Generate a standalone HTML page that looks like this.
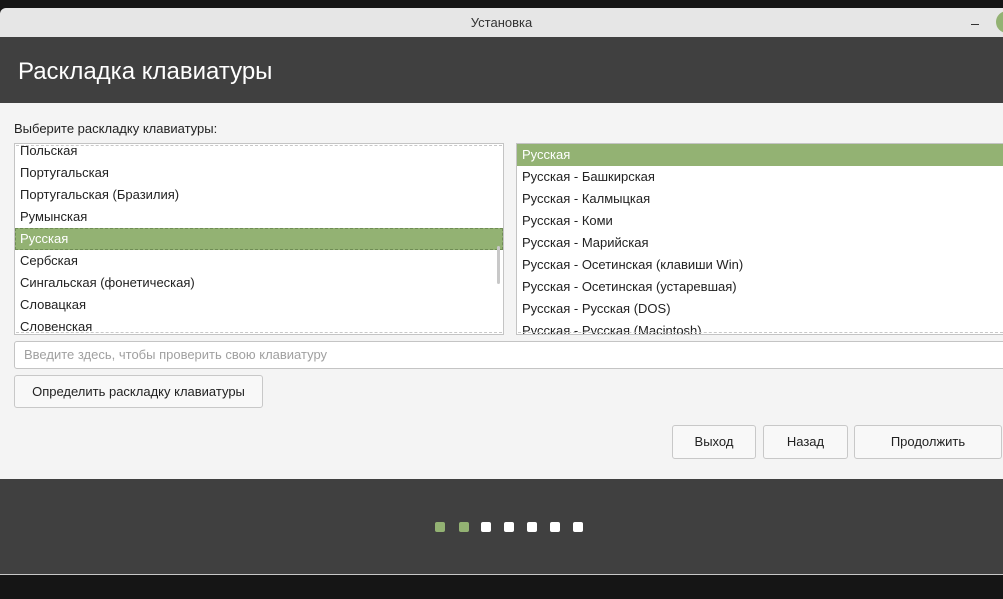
<!DOCTYPE html>
<html><head><meta charset="utf-8"><style>
*{margin:0;padding:0;box-sizing:border-box}
body{width:1003px;height:599px;overflow:hidden;background:#151515;font-family:"Liberation Sans","DejaVu Sans",sans-serif;font-size:13px;color:#222;position:relative}
.abs{position:absolute}
#title{left:0;top:8px;width:1003px;height:29px;background:#e6e6e6;border-radius:6px 0 0 0;text-align:center;line-height:29px;font-size:13px;color:#333}
#hdr{left:0;top:37px;width:1003px;height:66px;background:#404040;color:#fff;font-size:24px;padding-left:18px;line-height:70px}
#content{left:0;top:103px;width:1003px;height:376px;background:#f4f4f4}
#foot{left:0;top:479px;width:1003px;height:96px;background:#404040;border-bottom:1px solid #c8c8c8}
.list{background:#fff;border:1px solid #c4c4c4;overflow:hidden}
.row{height:22px;line-height:22px;padding-left:5px;white-space:nowrap}
.sel{background:#93b273;color:#fff}
.btn{background:#f8f8f8;border:1px solid #c8c8c8;border-radius:3px;text-align:center;font-size:13px;color:#222}
.dot{top:522px;width:10px;height:10px;border-radius:2px;background:#fff}
.g{background:#93b273}
.dash{border-top:1px dashed #c8c8c8;height:0}
</style></head><body>
<div class="abs" id="title">Установка</div>
<div class="abs" style="left:971px;top:24px;width:8px;height:1px;background:#333"></div>
<div class="abs" style="left:996px;top:11px;width:22px;height:22px;border-radius:50%;background:#93b273"></div>
<div class="abs" id="hdr">Раскладка клавиатуры</div>
<div class="abs" id="content"></div>
<div class="abs" style="left:14px;top:121px;font-size:13px;color:#222">Выберите раскладку клавиатуры:</div>
<div class="abs list" style="left:14px;top:143px;width:490px;height:192px">
 <div style="margin-top:-4px">
 <div class="row">Польская</div>
 <div class="row">Португальская</div>
 <div class="row">Португальская (Бразилия)</div>
 <div class="row">Румынская</div>
 <div class="row sel" style="width:488px;border:1px dashed #6f8c55;line-height:20px;padding-left:4px">Русская</div>
 <div class="row">Сербская</div>
 <div class="row">Сингальская (фонетическая)</div>
 <div class="row">Словацкая</div>
 <div class="row">Словенская</div>
 </div>
</div>
<div class="abs dash" style="left:16px;top:145px;width:486px"></div>
<div class="abs dash" style="left:16px;top:332px;width:486px"></div>
<div class="abs" style="left:497px;top:246px;width:3px;height:38px;background:#c8c8c8;border-radius:2px"></div>
<div class="abs list" style="left:516px;top:143px;width:500px;height:192px">
 <div class="row sel">Русская</div>
 <div class="row">Русская - Башкирская</div>
 <div class="row">Русская - Калмыцкая</div>
 <div class="row">Русская - Коми</div>
 <div class="row">Русская - Марийская</div>
 <div class="row">Русская - Осетинская (клавиши Win)</div>
 <div class="row">Русская - Осетинская (устаревшая)</div>
 <div class="row">Русская - Русская (DOS)</div>
 <div class="row">Русская - Русская (Macintosh)</div>
</div>
<div class="abs dash" style="left:518px;top:332px;width:485px"></div>
<div class="abs" style="left:14px;top:341px;width:1000px;height:28px;background:#fff;border:1px solid #c4c4c4;border-radius:3px;color:#a0a0a0;padding-left:9px;line-height:26px">Введите здесь, чтобы проверить свою клавиатуру</div>
<div class="abs btn" style="left:14px;top:375px;width:249px;height:33px;line-height:31px">Определить раскладку клавиатуры</div>
<div class="abs btn" style="left:672px;top:425px;width:84px;height:34px;line-height:32px">Выход</div>
<div class="abs btn" style="left:763px;top:425px;width:85px;height:34px;line-height:32px">Назад</div>
<div class="abs btn" style="left:854px;top:425px;width:148px;height:34px;line-height:32px">Продолжить</div>
<div class="abs" id="foot"></div>
<div class="abs dot g" style="left:435px"></div>
<div class="abs dot g" style="left:459px"></div>
<div class="abs dot" style="left:481px"></div>
<div class="abs dot" style="left:504px"></div>
<div class="abs dot" style="left:527px"></div>
<div class="abs dot" style="left:550px"></div>
<div class="abs dot" style="left:573px"></div>
</body></html>
